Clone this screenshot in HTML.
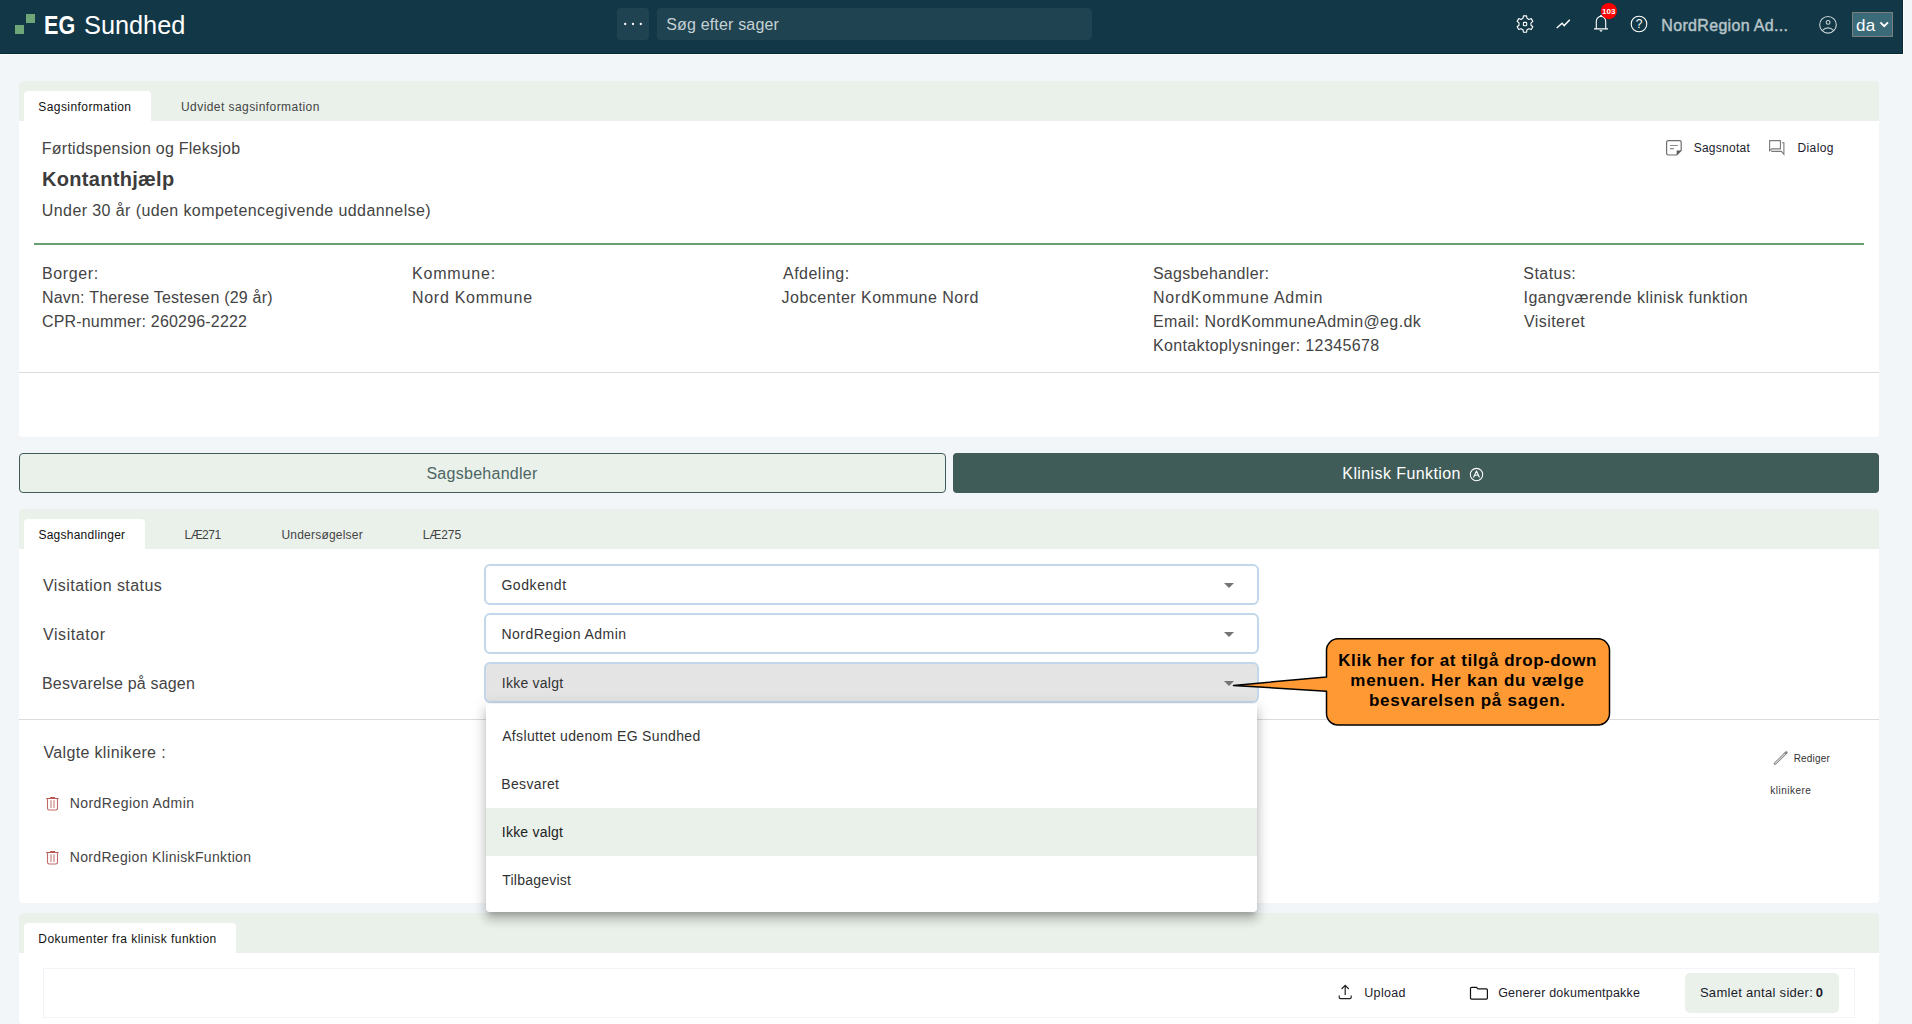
<!DOCTYPE html>
<html lang="da">
<head>
<meta charset="utf-8">
<title>EG Sundhed</title>
<style>
*{box-sizing:border-box;margin:0;padding:0}
html,body{width:1912px;height:1024px;overflow:hidden}
body{background:#f3f6f9;font-family:"Liberation Sans",sans-serif;color:#444;position:relative}
.t{position:absolute;white-space:pre;line-height:1}
.a{position:absolute}
#hdr{position:absolute;left:0;top:0;width:1903px;height:54px;background:#123746;box-shadow:inset -1px -1px 0 #08293a,1px 1px 0 #fdfefe}
.sq{position:absolute;width:9px;height:9px;background:#6fa679}
.hb{position:absolute;top:8px;height:32px;border-radius:4px;background:#1f4350}
#lang{position:absolute;left:1852px;top:12px;width:41px;height:25px;background:#3b6a78;border:1px solid #7c7f80}
#badge{position:absolute;left:1600.8px;top:3px;width:16.2px;height:16.2px;border-radius:50%;background:#fe0000}
.card{position:absolute;left:19px;width:1860px;background:#fff;border-radius:4px}
.strip{position:absolute;left:0;top:0;width:100%;height:40px;background:#eaf1ea;border-radius:4px 4px 0 0}
.tab{position:absolute;left:5px;top:10px;height:30px;background:#fff;border-radius:4px 4px 0 0}
.hr{position:absolute;left:19px;width:1860px;height:1px;background:#d9dcdf}
#btn1{position:absolute;left:19px;top:453px;width:927px;height:40px;border:1px solid #3f5b58;border-radius:4px;background:#eaf1ea}
#btn2{position:absolute;left:953px;top:453px;width:926px;height:40px;border-radius:4px;background:#3f5c58}
.sel{position:absolute;left:484px;width:775px;height:41px;border:2px solid #c2d7ea;border-radius:6px;background:#fff}
#pop{position:absolute;left:486px;top:704px;width:771px;height:208px;background:#fff;border-radius:0 0 4px 4px;box-shadow:0 5px 5px -3px rgba(0,0,0,.2),0 8px 10px 1px rgba(0,0,0,.14),0 3px 14px 2px rgba(0,0,0,.12)}
#pop i{position:absolute;left:0;top:104px;width:100%;height:48px;background:#eaf1ea}
svg{position:absolute;left:0;top:0;overflow:visible}
</style>
</head>
<body>
<div id="hdr">
  <div class="sq" style="left:15px;top:25px"></div><div class="sq" style="left:26px;top:14px"></div>
  <div class="hb" style="left:617px;width:32px"></div>
  <div class="hb" style="left:657px;width:435px"></div>
  <div id="lang"></div>
</div>

<div class="card" style="top:81px;height:356px"><div class="strip"></div><div class="tab" style="width:127px"></div></div>
<div class="a" style="left:34px;top:242.5px;width:1830px;height:2px;background:#6a9f72"></div>
<div class="hr" style="top:372px"></div>

<div id="btn1"></div>
<div id="btn2"></div>

<div class="card" style="top:509px;height:394px"><div class="strip"></div><div class="tab" style="width:121px"></div></div>
<div class="sel" style="top:564px"></div>
<div class="sel" style="top:613px"></div>
<div class="sel" style="top:662px;background:#e4e4e4"></div>
<div class="hr" style="top:719px"></div>

<div class="card" style="top:913px;height:111px"><div class="strip"></div><div class="tab" style="width:212px"></div>
  <div class="a" style="left:24px;top:55px;width:1812px;height:50px;border:1px solid #f1f3f8"></div>
  <div class="a" style="left:1666px;top:60px;width:154px;height:40px;border-radius:5px;background:#eaf1ea"></div>
</div>

<div id="pop"><i></i></div>

<!-- icons -->
<svg width="1912" height="1024" viewBox="0 0 1912 1024" fill="none">
  <!-- header dots -->
  <g fill="#fff"><circle cx="625.2" cy="24" r="1.15"/><circle cx="633" cy="24" r="1.15"/><circle cx="640.8" cy="24" r="1.15"/></g>
  <!-- gear -->
  <path d="M1523.01 18.28 L1523.42 15.90 L1526.58 15.90 L1526.99 18.28 L1529.00 19.45 L1531.26 18.60 L1532.85 21.35 L1530.99 22.89 L1530.99 25.21 L1532.85 26.75 L1531.26 29.50 L1529.00 28.65 L1526.99 29.82 L1526.58 32.20 L1523.42 32.20 L1523.01 29.82 L1521.00 28.65 L1518.74 29.50 L1517.15 26.75 L1519.01 25.21 L1519.01 22.89 L1517.15 21.35 L1518.74 18.60 L1521.00 19.45 Z" stroke="#fff" stroke-width="1.1" stroke-linejoin="round"/>
  <rect x="1523.4" y="22.4" width="3.3" height="3.3" rx=".8" stroke="#fff" stroke-width="1.1"/>
  <!-- chart -->
  <path d="M1556.7 28 L1562.1 23.2 L1564.2 25.6 L1569.8 19.7" stroke="#fff" stroke-width="1.4" stroke-linejoin="miter"/>
  <!-- bell -->
  <path d="M1594 28.9 H1608 M1596.3 28.9 V21.6 a4.7 5.2 0 0 1 9.4 0 V28.9" stroke="#fff" stroke-width="1.1"/>
  <circle cx="1601" cy="15.6" r=".9" fill="#fff"/>
  <path d="M1599.2 30.3 h3.6 l-1.8 1.7 z" fill="#fff"/>
  <circle cx="1608.9" cy="11.1" r="8.1" fill="#fe0000"/>
  <!-- help -->
  <circle cx="1639" cy="24" r="7.8" stroke="#fff" stroke-width="1.1"/>
  <!-- user -->
  <circle cx="1828" cy="24.85" r="8.3" stroke="#c9d3d7" stroke-width="1.1"/>
  <circle cx="1828.1" cy="22.4" r="1.9" stroke="#c9d3d7" stroke-width="1.1"/>
  <path d="M1822.2 30.6 Q1828 25.3 1833.8 30.6" stroke="#c9d3d7" stroke-width="1.1"/>
  <!-- lang chevron -->
  <path d="M1880.4 22.4 L1884.2 26.1 L1888 22.4" stroke="#fff" stroke-width="2"/>
  <!-- note icon -->
  <path d="M1668.5 140.6 H1679.3 a1.9 1.9 0 0 1 1.9 1.9 V150.5 L1676.7 155 H1668.5 a1.9 1.9 0 0 1 -1.9 -1.9 V142.5 a1.9 1.9 0 0 1 1.9 -1.9 z" stroke="#6f6f6f" stroke-width="1.2"/>
  <path d="M1681.2 150.5 H1676.7 V155 z" fill="#5a5a5a"/>
  <path d="M1670 145.5 H1677.8 M1670 148.6 H1673.8" stroke="#8a8a8a" stroke-width="1.2"/>
  <!-- dialog icon -->
  <path d="M1769.6 140.6 H1780.4 V148.9 H1771.7 L1769.6 150.7 Z" stroke="#7a7a7a" stroke-width="1.1"/>
  <path d="M1782 142.7 H1783.9 V154.3 L1781.4 151.4 H1771.8 V150.6" stroke="#7a7a7a" stroke-width="1.1"/>
  <!-- circle A -->
  <circle cx="1476.5" cy="474.6" r="6.2" stroke="#fff" stroke-width="1.1"/>
  <path d="M1473.5 477.4 L1476.5 470.9 L1479.5 477.4 M1474.4 475.7 Q1476.5 474.3 1478.6 475.7" stroke="#fff" stroke-width="1.1" stroke-linejoin="round"/>
  <!-- select arrows -->
  <g fill="#757575"><path d="M1224 583 h10 l-5 5z"/><path d="M1224 632 h10 l-5 5z"/><path d="M1224 681 h10 l-5 5z"/></g>
  <!-- trash -->
  <g stroke="#b95754" stroke-width="1.1">
   <path d="M46.2 798.5 H58.6 M50.2 797.5 H55"/>
   <path d="M47.5 798.5 V808.3 a1.7 1.7 0 0 0 1.7 1.7 H55.8 a1.7 1.7 0 0 0 1.7 -1.7 V798.5" stroke="#c26b68"/>
   <path d="M51 800.3 V808 M54 800.3 V808" stroke="#d9a5a3" stroke-width="1.6"/>
   <path d="M46.2 852.5 H58.6 M50.2 851.5 H55"/>
   <path d="M47.5 852.5 V862.3 a1.7 1.7 0 0 0 1.7 1.7 H55.8 a1.7 1.7 0 0 0 1.7 -1.7 V852.5" stroke="#c26b68"/>
   <path d="M51 854.3 V862 M54 854.3 V862" stroke="#d9a5a3" stroke-width="1.6"/>
  </g>
  <!-- pencil -->
  <path d="M1775 763.6 L1786.3 752.5" stroke="#808080" stroke-width="2.5" stroke-linecap="round"/>
  <path d="M1775.2 763.4 L1784.9 753.9" stroke="#fff" stroke-width="1" stroke-linecap="round"/>
  <!-- upload -->
  <path d="M1345.2 995 V985.6 M1341.6 989 L1345.2 985.4 L1348.8 989 M1339.2 995.4 V997.3 a1.3 1.3 0 0 0 1.3 1.3 H1349.9 a1.3 1.3 0 0 0 1.3 -1.3 V995.4" stroke="#222" stroke-width="1.2"/>
  <!-- folder -->
  <path d="M1470.5 988.3 a1 1 0 0 1 1 -1 H1476.5 L1478 988.9 H1486.4 a1 1 0 0 1 1 1 V998.1 a1 1 0 0 1 -1 1 H1471.5 a1 1 0 0 1 -1 -1 Z" stroke="#111" stroke-width="1.2"/>
  <!-- callout -->
  <path d="M1338 638.8 H1598 a11.5 11.5 0 0 1 11.5 11.5 V713.5 a11.5 11.5 0 0 1 -11.5 11.5 H1338 a11.5 11.5 0 0 1 -11.5 -11.5 V691.3 L1233.5 685.4 L1326.5 677 V650.3 a11.5 11.5 0 0 1 11.5 -11.5 Z" fill="#ff9933" stroke="#000" stroke-width="1.5" stroke-linejoin="round"/>
  <g font-family="Liberation Sans, sans-serif" font-weight="700" font-size="17" fill="#000">
    <text x="1338.3" y="665.6" textLength="258" lengthAdjust="spacing">Klik her for at tilgå drop-down</text>
    <text x="1350.3" y="686" textLength="233.5" lengthAdjust="spacing">menuen. Her kan du vælge</text>
    <text x="1369" y="706.4" textLength="196" lengthAdjust="spacing">besvarelsen på sagen.</text>
  </g>
  <text x="1639" y="28.2" font-family="Liberation Sans, sans-serif" font-size="12" fill="#fff" text-anchor="middle">?</text>
  <text x="1608.8" y="13.9" font-family="Liberation Sans, sans-serif" font-size="8" font-weight="700" fill="#fff" text-anchor="middle">103</text>
</svg>

<div class="t" style="left:43.57px;top:11.7px;font-size:26.5px;color:#fff;font-weight:700;transform:scaleX(0.8143);transform-origin:0 0;">EG</div>
<div class="t" style="left:83.89px;top:11.7px;font-size:26.5px;color:#fff;transform:scaleX(0.9549);transform-origin:0 0;">Sundhed</div>
<div class="t" style="left:666.2px;top:16.8px;font-size:16px;color:#c6d1d5;letter-spacing:0.171px;">Søg efter sager</div>
<div class="t" style="left:1661.3px;top:17.9px;font-size:16px;color:#b7c4c9;letter-spacing:0.327px;-webkit-text-stroke:.45px #b7c4c9;">NordRegion Ad...</div>
<div class="t" style="left:1855.9px;top:16.5px;font-size:17px;color:#fff;letter-spacing:0.3px;">da</div>
<div class="t" style="left:38.3px;top:100.8px;font-size:12px;color:#111;letter-spacing:0.429px;">Sagsinformation</div>
<div class="t" style="left:181.0px;top:100.8px;font-size:12px;color:#444;letter-spacing:0.436px;">Udvidet sagsinformation</div>
<div class="t" style="left:1693.7px;top:141.8px;font-size:12px;color:#1b1b2b;letter-spacing:0.25px;">Sagsnotat</div>
<div class="t" style="left:1797.5px;top:141.8px;font-size:12px;color:#1b1b2b;letter-spacing:0.38px;">Dialog</div>
<div class="t" style="left:41.8px;top:141.0px;font-size:16px;color:#444;letter-spacing:0.248px;">Førtidspension og Fleksjob</div>
<div class="t" style="left:42.0px;top:169.2px;font-size:20px;color:#3c3c3c;font-weight:700;letter-spacing:0.3px;">Kontanthjælp</div>
<div class="t" style="left:41.8px;top:203.3px;font-size:16px;color:#444;letter-spacing:0.409px;">Under 30 år (uden kompetencegivende uddannelse)</div>
<div class="t" style="left:42.0px;top:266.0px;font-size:16px;color:#444;letter-spacing:0.633px;">Borger:</div>
<div class="t" style="left:41.9px;top:290.0px;font-size:16px;color:#444;letter-spacing:0.217px;">Navn: Therese Testesen (29 år)</div>
<div class="t" style="left:41.9px;top:314.0px;font-size:16px;color:#444;letter-spacing:0.186px;">CPR-nummer: 260296-2222</div>
<div class="t" style="left:411.9px;top:266.0px;font-size:16px;color:#444;letter-spacing:0.843px;">Kommune:</div>
<div class="t" style="left:411.9px;top:290.0px;font-size:16px;color:#444;letter-spacing:0.736px;">Nord Kommune</div>
<div class="t" style="left:783.0px;top:266.0px;font-size:16px;color:#444;letter-spacing:0.487px;">Afdeling:</div>
<div class="t" style="left:781.6px;top:290.0px;font-size:16px;color:#444;letter-spacing:0.476px;">Jobcenter Kommune Nord</div>
<div class="t" style="left:1152.9px;top:266.0px;font-size:16px;color:#444;letter-spacing:0.308px;">Sagsbehandler:</div>
<div class="t" style="left:1152.9px;top:290.0px;font-size:16px;color:#444;letter-spacing:0.819px;">NordKommune Admin</div>
<div class="t" style="left:1152.9px;top:314.0px;font-size:16px;color:#444;letter-spacing:0.379px;">Email: NordKommuneAdmin@eg.dk</div>
<div class="t" style="left:1152.9px;top:338.0px;font-size:16px;color:#444;letter-spacing:0.374px;">Kontaktoplysninger: 12345678</div>
<div class="t" style="left:1523.3px;top:266.0px;font-size:16px;color:#444;letter-spacing:0.45px;">Status:</div>
<div class="t" style="left:1523.5px;top:290.0px;font-size:16px;color:#444;letter-spacing:0.446px;">Igangværende klinisk funktion</div>
<div class="t" style="left:1524.0px;top:314.0px;font-size:16px;color:#444;letter-spacing:0.412px;">Visiteret</div>
<div class="t" style="left:426.4px;top:466.0px;font-size:16px;color:#4d6663;letter-spacing:0.275px;">Sagsbehandler</div>
<div class="t" style="left:1342.3px;top:466.0px;font-size:16px;color:#fff;letter-spacing:0.407px;">Klinisk Funktion</div>
<div class="t" style="left:38.4px;top:528.9px;font-size:12px;color:#111;letter-spacing:0.254px;">Sagshandlinger</div>
<div class="t" style="left:184.5px;top:528.9px;font-size:12px;color:#444;letter-spacing:-0.525px;">LÆ271</div>
<div class="t" style="left:281.4px;top:528.9px;font-size:12px;color:#444;letter-spacing:0.217px;">Undersøgelser</div>
<div class="t" style="left:422.8px;top:528.9px;font-size:12px;color:#444;letter-spacing:-0.1px;">LÆ275</div>
<div class="t" style="left:43.0px;top:578.0px;font-size:16px;color:#444;letter-spacing:0.438px;">Visitation status</div>
<div class="t" style="left:43.0px;top:627.0px;font-size:16px;color:#444;letter-spacing:0.575px;">Visitator</div>
<div class="t" style="left:42.0px;top:676.0px;font-size:16px;color:#444;letter-spacing:0.189px;">Besvarelse på sagen</div>
<div class="t" style="left:501.4px;top:578.0px;font-size:14px;color:#333;letter-spacing:0.571px;">Godkendt</div>
<div class="t" style="left:501.4px;top:627.0px;font-size:14px;color:#333;letter-spacing:0.48px;">NordRegion Admin</div>
<div class="t" style="left:501.8px;top:676.0px;font-size:14px;color:#333;letter-spacing:0.244px;">Ikke valgt</div>
<div class="t" style="left:43.4px;top:745.0px;font-size:16px;color:#444;letter-spacing:0.353px;">Valgte klinikere :</div>
<div class="t" style="left:69.7px;top:796.0px;font-size:14px;color:#444;letter-spacing:0.453px;">NordRegion Admin</div>
<div class="t" style="left:69.7px;top:850.0px;font-size:14px;color:#444;letter-spacing:0.344px;">NordRegion KliniskFunktion</div>
<div class="t" style="left:1793.7px;top:754.0px;font-size:10px;color:#333;letter-spacing:0.167px;">Rediger</div>
<div class="t" style="left:1770.2px;top:785.8px;font-size:10px;color:#333;letter-spacing:0.5px;">klinikere</div>
<div class="t" style="left:38.3px;top:933.0px;font-size:12px;color:#111;letter-spacing:0.463px;">Dokumenter fra klinisk funktion</div>
<div class="t" style="left:1364.3px;top:987.0px;font-size:12.5px;color:#1b1b2b;letter-spacing:0.3px;">Upload</div>
<div class="t" style="left:1498.2px;top:987.0px;font-size:12.5px;color:#1b1b2b;letter-spacing:0.21px;">Generer dokumentpakke</div>
<div class="t" style="left:1699.9px;top:986.0px;font-size:13px;color:#1b1b2b;letter-spacing:0.294px;">Samlet antal sider:</div>
<div class="t" style="left:1815.8px;top:986.0px;font-size:13px;color:#1b1b2b;font-weight:700;">0</div>
<div class="t" style="left:502.2px;top:729.0px;font-size:14px;color:#333;letter-spacing:0.342px;">Afsluttet udenom EG Sundhed</div>
<div class="t" style="left:501.2px;top:777.0px;font-size:14px;color:#333;letter-spacing:0.357px;">Besvaret</div>
<div class="t" style="left:501.8px;top:825.0px;font-size:14px;color:#222;letter-spacing:0.222px;">Ikke valgt</div>
<div class="t" style="left:502.2px;top:873.0px;font-size:14px;color:#333;letter-spacing:0.24px;">Tilbagevist</div>
</body>
</html>
